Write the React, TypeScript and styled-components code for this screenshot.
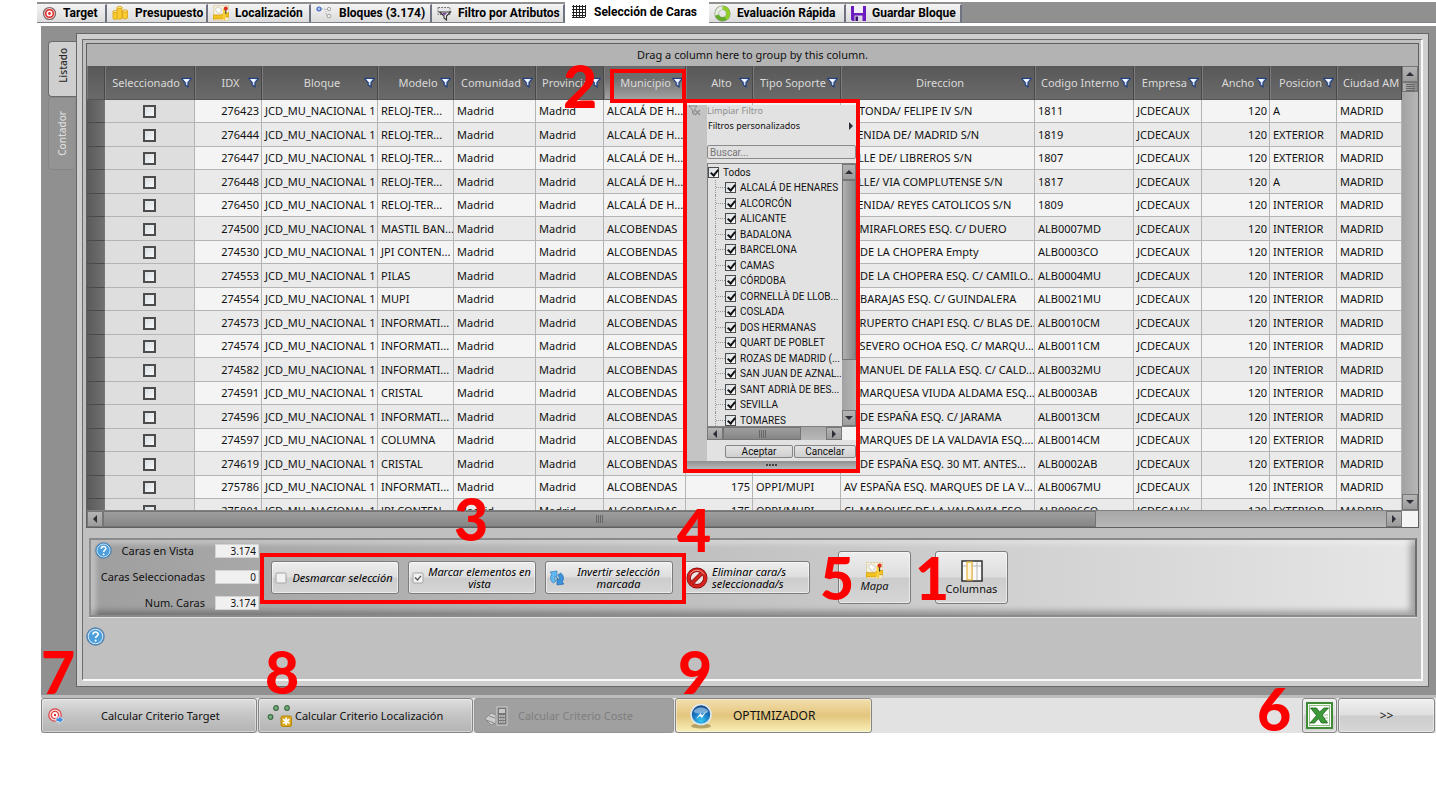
import React from "react";
import styled, { createGlobalStyle, css } from "styled-components";

const ui = `"Noto Sans", "Open Sans", sans-serif`;
const compact = `Roboto, "Liberation Sans", sans-serif`;

const GlobalStyle = createGlobalStyle`
  * { box-sizing: border-box; }
  body { margin: 0; background: #fff; font-family: ${ui}; font-size: 11px; color: #111; }
  button, input { font: inherit; color: inherit; margin: 0; }
`;

const Page = styled.div`
  position: relative;
  padding-top: 2px;
  min-width: 1200px;
`;

/* ---------- top tabs ---------- */

const TabStrip = styled.nav`
  display: flex;
  align-items: flex-end;
  height: 21px;
  margin-left: 37px;
  background: #909090;
  border-bottom: 1px solid #808088;
`;

const TopTab = styled.button<{ $w: number; $active?: boolean }>`
  display: flex;
  align-items: center;
  gap: 6px;
  flex: 0 0 ${(p) => p.$w}px;
  height: 18px;
  padding: 0 0 1px 5px;
  border: 0;
  border-top: 1px solid #f4f4f4;
  border-right: 2px solid #6f7380;
  background: linear-gradient(#f2f2f2, #dcdcdc);
  font: bold 12px/16px ${compact};
  color: #000;
  white-space: nowrap;
  ${(p) =>
    p.$active &&
    css`
      height: 22px;
      margin-bottom: -1px;
      padding: 0 0 2px 7px;
      gap: 8px;
      border-color: #fff;
      background: #fff;
    `}
`;

/* ---------- main frame ---------- */

const Main = styled.main`
  display: flex;
  margin: 3px 0 0 41px;
  padding: 7px 7px 8px;
  background: #909090;
`;

const SideTabs = styled.div`
  flex: 0 0 27px;
  padding-top: 8px;
`;

const SideTab = styled.button<{ $active?: boolean }>`
  position: relative;
  display: flex;
  align-items: center;
  justify-content: center;
  width: ${(p) => (p.$active ? 28 : 26)}px;
  height: ${(p) => (p.$active ? 56 : 73)}px;
  padding: 0 0 ${(p) => (p.$active ? 8 : 0)}px;
  border: 1px solid ${(p) => (p.$active ? "#6a6a6a" : "#868686")};
  border-right: 0;
  border-radius: 4px 0 0 4px;
  background: ${(p) => (p.$active ? "#cfcfcf" : "#949494")};
  color: ${(p) => (p.$active ? "#2a2a2a" : "#dcdcdc")};
  font-size: 10px;
  font-weight: 500;
  span {
    writing-mode: vertical-rl;
    transform: rotate(180deg);
  }
`;

const Frame = styled.div`
  flex: 1;
  min-width: 0;
  padding: 5px;
  border: 1px solid #666;
  background: #cfcfcf;
`;

const FrameBody = styled.div`
  min-height: 642px;
  padding: 3px 2px 3px 3px;
  border: 1px solid #6c6c6c;
  border-right: 2px solid #fafafa;
  border-bottom: 2px solid #fafafa;
  background: #c0c0c0;
`;

/* ---------- grid ---------- */

const GridBox = styled.section`
  border: 1px solid #5f5f5f;
  background: #f4f4f4;
`;

const GroupBar = styled.div`
  height: 22px;
  line-height: 22px;
  text-align: center;
  background: #b3b3b3;
`;

const GridBody = styled.div`
  display: flex;
  height: 444px;
`;

const TableClip = styled.div`
  flex: 1;
  min-width: 0;
  overflow: hidden;
`;

const Table = styled.table`
  width: 100%;
  table-layout: fixed;
  border-collapse: separate;
  border-spacing: 0;
`;

const Th = styled.th<{ $hot?: boolean }>`
  height: 34px;
  padding: 0 2px 0 4px;
  border-right: 1px solid #484848;
  border-left: 1px solid #7a7a7a;
  border-bottom: 1px solid #555;
  background: ${(p) =>
    p.$hot ? "linear-gradient(#6a6a6a, #707070 40%, #a2a2a2)" : "linear-gradient(#585858, #6a6a6a)"};
  color: #dadada;
  font-weight: 400;
  overflow: hidden;
`;

const HeadInner = styled.div`
  display: flex;
  align-items: center;
  gap: 1px;
  white-space: nowrap;
  &::before {
    content: "";
    flex: 0 1 13px;
  }
  span {
    flex: 1 0 auto;
    text-align: center;
  }
  svg {
    flex: none;
  }
`;

const Row = styled.tr<{ $odd: boolean }>`
  height: ${(p) => (p.$odd ? 24 : 23)}px;
  background: ${(p) => (p.$odd ? "#eaeaea" : "#f4f4f4")};
`;

const Td = styled.td<{ $align?: string; $tone?: string }>`
  padding: 0 ${(p) => (p.$align === "right" ? 2 : 0)}px 0 ${(p) => (p.$align ? 0 : 3)}px;
  border-right: 1px solid #b4b4b4;
  border-bottom: 1px solid #b4b4b4;
  line-height: 14px;
  text-align: ${(p) => p.$align || "left"};
  white-space: nowrap;
  overflow: hidden;
  background: ${(p) => p.$tone || "transparent"};
`;

const Handle = styled.td`
  border-bottom: 1px solid #4a4a4a;
  border-right: 1px solid #777;
  background: linear-gradient(90deg, #5a5a5a, #707070);
`;

const Check = styled.input.attrs({ type: "checkbox" })<{ $size: number }>`
  appearance: none;
  position: relative;
  flex: none;
  display: inline-block;
  vertical-align: middle;
  width: ${(p) => p.$size}px;
  height: ${(p) => p.$size}px;
  border: ${(p) => (p.$size > 12 ? "2px" : "1px")} solid #4c4c4c;
  background: linear-gradient(135deg, #d8dee2, #f6f8fa);
  &:checked::after {
    content: "";
    position: absolute;
    left: 3px;
    top: 0;
    width: 3px;
    height: 6px;
    border: solid #111;
    border-width: 0 2px 2px 0;
    transform: rotate(40deg);
  }
`;

/* ---------- scroll bars ---------- */

const VBar = styled.div<{ $w: number }>`
  display: flex;
  flex-direction: column;
  flex: 0 0 ${(p) => p.$w}px;
  background: linear-gradient(90deg, #a2a2a2, #b6b6b6);
`;

const HBar = styled.div`
  display: flex;
  flex: 1;
  min-width: 0;
  background: linear-gradient(#a6a6a6, #b8b8b8);
`;

const HLine = styled.div<{ $h: number }>`
  display: flex;
  border-top: 1px solid #808080;
  height: ${(p) => p.$h}px;
`;

const Corner = styled.div<{ $w: number }>`
  flex: 0 0 ${(p) => p.$w}px;
  background: #f4f4f4;
`;

const ArrowButton = styled.button`
  display: flex;
  align-items: center;
  justify-content: center;
  flex: 0 0 16px;
  min-width: 13px;
  padding: 0;
  border: 1px solid #777;
  background: linear-gradient(#b4b4b4, #9c9c9c);
`;

const Thumb = styled.div<{ $basis: string; $vertical?: boolean }>`
  display: flex;
  align-items: center;
  justify-content: center;
  flex: 0 0 ${(p) => p.$basis};
  border: 1px solid #747474;
  background: ${(p) =>
    p.$vertical ? "linear-gradient(90deg, #b0b0b0, #888)" : "linear-gradient(#9e9e9e, #868686)"};
`;

const Fill = styled.div`
  flex: 1;
`;

/* ---------- selection tools ---------- */

const Tools = styled.section`
  display: flex;
  align-items: center;
  height: 79px;
  margin: 10px 2px 0 3px;
  padding: 0 6px 0 4px;
  border: 2px solid;
  border-color: #8a8a8a #6e6e6e #8a8a8a #909090;
  background: linear-gradient(90deg, #9f9f9f, #c2c2c2 48%, #e6e6e6);
  box-shadow: inset 5px 4px 5px rgba(255, 255, 255, 0.35), inset -5px -4px 6px rgba(0, 0, 0, 0.3),
    0 1px 0 #e2e2e2;
`;

const Fields = styled.div`
  display: grid;
  grid-template-columns: 110px 44px;
  column-gap: 10px;
  row-gap: 12px;
  margin-right: 12px;
  padding-bottom: 2px;
`;

const FieldLabel = styled.label`
  height: 14px;
  line-height: 14px;
  text-align: right;
  white-space: nowrap;
`;

const LabelWithHelp = styled.div`
  display: flex;
  align-items: center;
  justify-content: space-between;
  height: 14px;
  padding-right: 11px;
`;

const HelpButton = styled.button`
  display: block;
  padding: 0;
  border: 0;
  background: none;
  line-height: 0;
`;

const NumberBox = styled.input`
  width: 44px;
  height: 14px;
  padding: 1px 2px 0;
  border: 1px solid #d4d4d4;
  background: #f0f0f0;
  font-size: 10px;
  line-height: 12px;
  text-align: right;
`;

const buttonFace = css`
  border: 1px solid #7c7c7c;
  border-radius: 3px;
  background: linear-gradient(#eeeeee, #dddddd 49%, #cccccc 51%, #d6d6d6);
  box-shadow: inset 0 0 0 1px rgba(255, 255, 255, 0.5);
`;

const ToolButton = styled.button<{ $left?: boolean }>`
  ${buttonFace}
  display: flex;
  align-items: center;
  gap: 4px;
  flex: 0 0 128px;
  height: 33px;
  margin-right: 9px;
  padding: 0 4px 0 3px;
  color: #000;
  font-style: italic;
  line-height: 12px;
  svg {
    flex: none;
  }
  span {
    flex: 1;
    text-align: ${(p) => (p.$left ? "left" : "center")};
  }
`;

const TileButton = styled.button<{ $italic?: boolean }>`
  ${buttonFace}
  display: flex;
  flex-direction: column;
  align-items: center;
  justify-content: center;
  flex: 0 0 73px;
  height: 53px;
  margin-left: ${(p) => (p.$italic ? 19 : 24)}px;
  padding: 0;
  line-height: 14px;
  font-style: ${(p) => (p.$italic ? "italic" : "normal")};
`;

const HelpRow = styled.div`
  padding-top: 10px;
`;

/* ---------- bottom bar ---------- */

const BottomBar = styled.footer`
  display: flex;
  gap: 1px;
  margin-left: 41px;
  padding-right: 1px;
  border-top: 3px solid #bcbcbc;
  background: #e2e2e2;
`;

const BottomButton = styled.button<{
  $w: number;
  $tone?: "gold" | "light";
  $pad?: number;
  $gap?: number;
  $center?: boolean;
}>`
  display: flex;
  align-items: center;
  justify-content: ${(p) => (p.$center ? "center" : "flex-start")};
  gap: ${(p) => p.$gap || 0}px;
  flex: 0 0 ${(p) => p.$w}px;
  height: 35px;
  padding: 0 0 0 ${(p) => p.$pad || 0}px;
  border: 1px solid #858585;
  border-radius: 3px;
  background: ${(p) =>
    p.$tone === "gold"
      ? "linear-gradient(#f3dfae, #e3c67e 50%, #f8efb8)"
      : p.$tone === "light"
        ? "linear-gradient(#f0f0f0, #dedede 49%, #cdcdcd 51%, #d6d6d6)"
        : "linear-gradient(#dedede, #c4c4c4 50%, #b4b4b4)"};
  box-shadow: inset 0 0 0 1px rgba(255, 255, 255, 0.4);
  color: #111;
  font-size: ${(p) => (p.$tone ? 12 : 11)}px;
  white-space: nowrap;
  &:disabled {
    background: #a0a0a0;
    border-color: #969696;
    box-shadow: none;
    color: #7e7e7e;
  }
`;

/* ---------- filter popup ---------- */

const Popup = styled.div`
  position: absolute;
  left: 683px;
  top: 99px;
  width: 177px;
  height: 374px;
  padding-top: 2px;
  border: 4px solid #f00;
  display: flex;
  flex-direction: column;
  overflow: hidden;
`;

const PopupBody = styled.div`
  display: flex;
  flex: 1;
  min-height: 0;
  background: #e2e2e2;
`;

const PopupGutter = styled.div`
  flex: 0 0 20px;
  background: #c4c4c4;
  svg {
    display: block;
  }
`;

const PopupContent = styled.div`
  flex: 1;
  min-width: 0;
  display: flex;
  flex-direction: column;
`;

const MenuItem = styled.button`
  display: flex;
  align-items: center;
  justify-content: space-between;
  height: 17px;
  padding: 0 1px;
  border: 0;
  background: none;
  font-size: 9px;
  line-height: 12px;
  &:disabled {
    height: 12px;
    padding: 0;
    color: #8e8e8e;
  }
`;

const SearchBox = styled.input`
  height: 14px;
  margin-top: 11px;
  padding: 0 2px;
  border: 1px solid #8a8a8a;
  border-radius: 2px;
  background: #e0e0e0;
  font: 10px/12px ${compact};
  &::placeholder {
    color: #777;
  }
`;

const ListBox = styled.div`
  display: flex;
  height: 263px;
  margin-top: 4px;
  border: 1px solid #808080;
  border-width: 1px 0 0 1px;
`;

const List = styled.div`
  flex: 1;
  min-width: 0;
  overflow: hidden;
`;

const ListItem = styled.label<{ $child?: boolean }>`
  display: flex;
  align-items: center;
  gap: 4px;
  height: 16px;
  font: 10px/15px ${compact};
  white-space: nowrap;
  ${(p) =>
    p.$child &&
    css`
      &:nth-child(even) { height: 15px; }
      margin-left: 7px;
      border-left: 1px dotted #999;
      &::before {
        content: "";
        flex: 0 0 9px;
        margin-right: -4px;
        border-top: 1px dotted #999;
      }
    `}
`;

const PopupActions = styled.div`
  display: flex;
  gap: 1px;
  margin: 5px 0 0 18px;
`;

const SmallButton = styled.button<{ $w: number }>`
  flex: 0 0 ${(p) => p.$w}px;
  height: 13px;
  padding: 0;
  border: 1px solid #858585;
  border-radius: 2px;
  background: linear-gradient(#e4e4e4, #cfcfcf);
  font: 10px/11px ${compact};
`;

const Grip = styled.div`
  display: flex;
  gap: 1px;
  justify-content: center;
  align-items: center;
  flex: 0 0 8px;
  background: linear-gradient(#909090, #b8b8b8);
  i {
    width: 2px;
    height: 2px;
    background: #444;
  }
`;

/* ---------- callouts ---------- */

const Outline = styled.div<{ $x: number; $y: number; $w: number; $h: number }>`
  position: absolute;
  left: ${(p) => p.$x}px;
  top: ${(p) => p.$y}px;
  width: ${(p) => p.$w}px;
  height: ${(p) => p.$h}px;
  border: 4px solid #f00;
  pointer-events: none;
`;

const Digit = styled.div<{ $x: number; $y: number }>`
  position: absolute;
  left: ${(p) => p.$x}px;
  top: ${(p) => p.$y}px;
  color: #f00;
  font: 900 59px/60px Lato, sans-serif;
  pointer-events: none;
`;

/* ---------- icons ---------- */

const Funnel = () => (
  <svg width="11" height="11" viewBox="0 0 11 11">
    <path d="M.6 1.300h9.800L7 5.600v4.200L4.200 8V5.600z" fill="#cfe0fa" stroke="#26417e" strokeWidth="1.200" />
    <path d="M2.400 2.200h5L5.400 5z" fill="#fff" />
  </svg>
);

const Arrow = ({ dir }: { dir: "up" | "down" | "left" | "right" }) => {
  const shapes = { up: "M0 6l4-4 4 4z", down: "M0 2l4 4 4-4z", left: "M6 0L2 4l4 4z", right: "M2 0l4 4-4 4z" };
  return (
    <svg width="8" height="8" viewBox="0 0 8 8">
      <path d={shapes[dir]} fill="#2e2e36" />
    </svg>
  );
};

const ThumbLines = ({ vertical }: { vertical?: boolean }) => (
  <svg width="9" height="8" viewBox="0 0 9 8">
    <path
      d={vertical ? "M0 1h9M0 3h9M0 5h9M0 7h9" : "M1 0v8M3 0v8M5 0v8M7 0v8"}
      stroke="#666"
      shapeRendering="crispEdges"
    />
  </svg>
);

const TargetIcon = () => (
  <svg width="15" height="15" viewBox="0 0 15 15">
    <circle cx="7.500" cy="7.500" r="6" fill="#f4d6d6" stroke="#7d6464" strokeWidth="1.200" />
    <circle cx="7.500" cy="7.500" r="3.800" fill="#fff" stroke="#e22a2a" strokeWidth="1.600" />
    <circle cx="7.500" cy="7.500" r="1.400" fill="#e22a2a" />
  </svg>
);

const CoinsIcon = () => (
  <svg width="17" height="16" viewBox="0 0 17 16">
    <g fill="#f9cb2e" stroke="#d9a012" strokeWidth=".8">
      <path d="M1 6.500v7c0 1.200 4.600 1.200 4.600 0v-7z" />
      <ellipse cx="3.300" cy="6.500" rx="2.300" ry="1.100" fill="#fde58a" />
      <path d="M5 2.500v10.800c0 1.200 5 1.200 5 0V2.500z" />
      <ellipse cx="7.500" cy="2.500" rx="2.500" ry="1.200" fill="#fde58a" />
      <path d="M10.500 6v7c0 1.200 5 1.200 5 0V6z" />
      <ellipse cx="13" cy="6" rx="2.500" ry="1.200" fill="#fde58a" />
    </g>
  </svg>
);

const MapIcon = ({ size = 16 }: { size?: number }) => (
  <svg width={size} height={size} viewBox="0 0 16 16">
    <rect x="0.500" y="0.500" width="15" height="15" fill="#f5efda" stroke="#d8cba0" strokeDasharray="2 1" />
    <path d="M2 4l3-2 4 3-3 4z" fill="#fff" stroke="#bbb" strokeWidth=".7" />
    <path d="M0 10h8l3-2h5v4h-5l-2 2H0z" fill="#f2c21e" stroke="#cf9a10" strokeWidth=".7" />
    <path d="M10 15V4h2.500v11z" fill="#f6d040" />
    <circle cx="12.800" cy="3.500" r="2" fill="#dc2f1c" />
    <path d="M12.800 5v4" stroke="#333" />
  </svg>
);

const NodesIcon = () => (
  <svg width="17" height="16" viewBox="0 0 17 16">
    <path d="M6 4h4M10 4v6h2" stroke="#aaa" strokeDasharray="1 1" fill="none" />
    <circle cx="3" cy="4" r="2" fill="#a9c4f5" stroke="#3a62b8" strokeWidth="1.200" />
    <circle cx="13" cy="4" r="1.700" fill="#eee" stroke="#a5a5a5" />
    <circle cx="13" cy="11" r="1.900" fill="#eee" stroke="#a5a5a5" />
  </svg>
);

const FilterIcon = () => (
  <svg width="15" height="15" viewBox="0 0 15 15">
    <rect x="1" y="1.500" width="12" height="7" fill="#e6e6ea" stroke="#777" strokeDasharray="2 1" />
    <path d="M2.500 6h11L9.500 10v4L7 12v-2z" fill="#eee" stroke="#333" strokeWidth="1.100" />
    <path d="M5 7h5l-2.500 2.500z" fill="#7a3fa0" />
  </svg>
);

const GridIcon = () => (
  <svg width="14" height="13" viewBox="0 0 14 13">
    <path
      d="M0 1h13M0 4h13M0 7h13M0 10h13M0 12h13M1 0v12M4 0v12M7 0v12M10 0v12M13 0v12"
      stroke="#222"
      fill="none"
      shapeRendering="crispEdges"
    />
  </svg>
);

const CycleIcon = () => (
  <svg width="17" height="17" viewBox="0 0 17 17" fill="none">
    <circle cx="8.500" cy="8.500" r="5.800" stroke="#8a9a78" strokeWidth="4.600" />
    <path d="M8.500 2.700a5.800 5.800 0 0 1 3 10.700" stroke="#8fd024" strokeWidth="3.400" />
    <path d="M11.500 13.400A5.800 5.800 0 0 1 3 10" stroke="#5fae22" strokeWidth="3.400" />
    <path d="M3 10a5.800 5.800 0 0 1 5.500-7.300" stroke="#e6ece0" strokeWidth="3.400" />
  </svg>
);

const FloppyIcon = () => (
  <svg width="15" height="15" viewBox="0 0 15 15">
    <path d="M0 0h15v15H1.500L0 13.500z" fill="#6a1cc0" />
    <rect x="3" y="0" width="9" height="7" fill="#f4f0fa" />
    <rect x="3.500" y="9.500" width="8" height="5.500" fill="#dcd4e8" />
    <rect x="4.500" y="10.500" width="2.500" height="4.500" fill="#35106a" />
  </svg>
);

const HelpIcon = ({ size }: { size: number }) => (
  <svg width={size} height={size} viewBox="0 0 18 18">
    <circle cx="9" cy="9" r="8.300" fill="#2f7fc4" stroke="#5f86a8" strokeWidth="1" />
    <circle cx="9" cy="9" r="6.900" fill="#4d9fdc" stroke="#cfe6f7" strokeWidth="1" />
    <path d="M6.600 7.200c0-3.200 4.900-3.200 4.900-.3 0 1.700-2.400 1.700-2.400 3.600" fill="none" stroke="#fff" strokeWidth="1.600" />
    <circle cx="9.100" cy="12.900" r="1" fill="#fff" />
  </svg>
);

const BoxIcon = ({ ticked }: { ticked?: boolean }) => (
  <svg width="12" height="12" viewBox="0 0 12 12">
    <rect x="1" y="1" width="10" height="10" rx="1" fill="#f2f2f2" stroke="#a4a4a4" />
    {ticked && <path d="M3 5.500l2.500 2.500L9 3.800" fill="none" stroke="#555" strokeWidth="1.300" />}
  </svg>
);

const RefreshIcon = () => (
  <svg width="16" height="16" viewBox="0 0 16 16">
    <path d="M1 2l7-1v7L6 6.200C5.400 7.800 5.800 9.500 7 11l-2.600 2C1.500 11 .6 7.500 2.800 4z" fill="#62b8ee" stroke="#2f80c0" strokeWidth=".7" />
    <path d="M15 14l-7 1V8l2 1.800c.6-1.600.2-3.300-1-4.800l2.600-2c2.900 2 3.800 5.500 1.600 9z" fill="#3b93dc" stroke="#2468a8" strokeWidth=".7" />
  </svg>
);

const ForbidIcon = () => (
  <svg width="22" height="22" viewBox="0 0 22 22">
    <circle cx="11" cy="11" r="8.300" fill="#efe3e3" stroke="#7e0d0d" strokeWidth="4.400" />
    <circle cx="11" cy="11" r="8.300" fill="none" stroke="#d8221d" strokeWidth="3" />
    <path d="M5.500 16.500l11-11" stroke="#7e0d0d" strokeWidth="4" />
    <path d="M5.500 16.500l11-11" stroke="#d8221d" strokeWidth="2.800" />
    <path d="M4 7.500a8 8 0 0 1 14 0" fill="none" stroke="#f49a90" strokeWidth="1" />
  </svg>
);

const ColumnsIcon = () => (
  <svg width="22" height="22" viewBox="0 0 22 22">
    <rect x="1" y="1" width="20" height="20" fill="#fafafa" stroke="#222" strokeWidth="1.400" />
    <path d="M2 6h18M11 2v18M16 2v18" stroke="#b8b8b8" />
    <rect x="6" y="2" width="5" height="18" fill="#fdf6dc" stroke="#e8b440" strokeWidth="1.200" />
  </svg>
);

const TargetArrowIcon = () => (
  <svg width="17" height="16" viewBox="0 0 17 16">
    <circle cx="7" cy="7" r="6.200" fill="#fbe0e0" stroke="#d84848" strokeWidth="1.300" />
    <circle cx="7" cy="7" r="3.600" fill="#fff" stroke="#e04444" strokeWidth="1.400" />
    <circle cx="7" cy="7" r="1.200" fill="#d83030" />
    <path d="M8 10h3V7.800l4.500 4-4.500 3.800V13.500H8z" fill="#3f8fe0" stroke="#fff" strokeWidth=".6" />
  </svg>
);

const StarNodesIcon = () => (
  <svg width="26" height="24" viewBox="0 0 26 24">
    <g fill="#76b07e" stroke="#3d6b45" strokeWidth="1.200">
      <circle cx="9" cy="4" r="2.300" />
      <circle cx="20" cy="4" r="2.300" />
      <circle cx="3.500" cy="13" r="2.300" />
    </g>
    <rect x="14" y="12" width="10.500" height="10.500" rx="1.500" fill="#dba91a" stroke="#b38610" />
    <path d="M19.200 13.500v7.500M16 15.300l6.500 4M22.500 15.300l-6.500 4" stroke="#fff" strokeWidth="1.700" />
  </svg>
);

const CalcIcon = () => (
  <svg width="24" height="20" viewBox="0 0 24 20">
    <path d="M1 13l6-6 5 2v8l-5 2z" fill="#ccc" stroke="#8a8a8a" />
    <path d="M2 14l8 3M5 10l6 2" stroke="#888" />
    <rect x="13" y="1" width="10" height="18" fill="#777" stroke="#d0d0d0" />
    <rect x="15" y="3" width="6" height="4" fill="#c8c8c8" />
    <path d="M15 10h6M15 13h6M15 16h6" stroke="#d8d8d8" strokeWidth="1.600" strokeDasharray="1.500 .7" />
  </svg>
);

const BallIcon = () => (
  <svg width="24" height="26" viewBox="0 0 24 26">
    <defs>
      <radialGradient id="ball" cx=".5" cy=".8" r=".8">
        <stop offset="0" stopColor="#35c8f4" />
        <stop offset=".5" stopColor="#1b7cc4" />
        <stop offset="1" stopColor="#103a7c" />
      </radialGradient>
    </defs>
    <ellipse cx="12" cy="23" rx="10" ry="2.500" fill="#8b7a3c" opacity=".6" />
    <circle cx="12" cy="11.500" r="10" fill="url(#ball)" stroke="#dfe8ee" strokeWidth="1.600" />
    <path d="M4.500 9C6 3 18 3 19.500 9c-4 2-11 2-15 0z" fill="#9fc8e8" opacity=".7" />
    <path d="M7 16l4.500-6 1.500 2.500L17.500 8 13 15l-2-2z" fill="#fff" />
  </svg>
);

const ExcelIcon = () => (
  <svg width="27" height="27" viewBox="0 0 27 27">
    <rect x="1" y="1" width="25" height="25" fill="#f6faf4" stroke="#3f8a34" strokeWidth="2" />
    <rect x="3.500" y="3.500" width="20" height="20" fill="#fff" stroke="#8fbf80" />
    <path d="M16 16h6M16 19h6M17 13h5" stroke="#9cc48c" />
    <path d="M4.500 6h6l3 4L18 6h4.500l-6.500 7 5.500 8h-6l-3-4.500L8.500 21H4l6.500-7.500z" fill="#3c9a38" stroke="#1d5e1c" strokeWidth=".8" />
  </svg>
);

const ClearFilterIcon = () => (
  <svg width="14" height="11" viewBox="0 0 14 11">
    <path d="M2 1h8L7 5v5L5.500 8V5z" fill="none" stroke="#8d8d8d" />
    <path d="M8 5l5 5M13 5l-5 5" stroke="#8d8d8d" strokeWidth="1.300" />
  </svg>
);

/* ---------- data ---------- */

const topTabs = [
  { label: "Target", w: 70, icon: <TargetIcon /> },
  { label: "Presupuesto", w: 101, icon: <CoinsIcon /> },
  { label: "Localización", w: 103, icon: <MapIcon /> },
  { label: "Bloques (3.174)", w: 121, icon: <NodesIcon /> },
  { label: "Filtro por Atributos", w: 133, icon: <FilterIcon /> },
  { label: "Selección de Caras", w: 144, icon: <GridIcon />, active: true },
  { label: "Evaluación Rápida", w: 137, icon: <CycleIcon /> },
  { label: "Guardar Bloque", w: 116, icon: <FloppyIcon /> },
];

const columns: { label: string; w?: number; hot?: boolean; noFilter?: boolean }[] = [
  { label: "Seleccionado", w: 90 },
  { label: "IDX", w: 67 },
  { label: "Bloque", w: 116 },
  { label: "Modelo", w: 76 },
  { label: "Comunidad", w: 82 },
  { label: "Provincia", w: 68 },
  { label: "Municipio", w: 82, hot: true },
  { label: "Alto", w: 67 },
  { label: "Tipo Soporte", w: 88 },
  { label: "Direccion" },
  { label: "Codigo Interno", w: 99 },
  { label: "Empresa", w: 68 },
  { label: "Ancho", w: 68 },
  { label: "Posicion", w: 67 },
  { label: "Ciudad AM", w: 65, noFilter: true },
];

type Face = [string, string, string, string, string, string];

const faces: Face[] = [
  ["276423", "RELOJ-TER...", "ALCALÁ DE H...", "ROTONDA/ FELIPE IV S/N", "1811", "A"],
  ["276444", "RELOJ-TER...", "ALCALÁ DE H...", "AVENIDA DE/ MADRID S/N", "1819", "EXTERIOR"],
  ["276447", "RELOJ-TER...", "ALCALÁ DE H...", "CALLE DE/ LIBREROS S/N", "1807", "EXTERIOR"],
  ["276448", "RELOJ-TER...", "ALCALÁ DE H...", "CALLE/ VIA COMPLUTENSE S/N", "1817", "A"],
  ["276450", "RELOJ-TER...", "ALCALÁ DE H...", "AVENIDA/ REYES CATOLICOS S/N", "1809", "INTERIOR"],
  ["274500", "MASTIL BAN...", "ALCOBENDAS", "CL MIRAFLORES ESQ. C/ DUERO", "ALB0007MD", "INTERIOR"],
  ["274530", "JPI CONTEN...", "ALCOBENDAS", "AV DE LA CHOPERA Empty", "ALB0003CO", "INTERIOR"],
  ["274553", "PILAS", "ALCOBENDAS", "AV DE LA CHOPERA ESQ. C/ CAMILO...", "ALB0004MU", "INTERIOR"],
  ["274554", "MUPI", "ALCOBENDAS", "AV BARAJAS ESQ. C/ GUINDALERA", "ALB0021MU", "INTERIOR"],
  ["274573", "INFORMATI...", "ALCOBENDAS", "CL RUPERTO CHAPI ESQ. C/ BLAS DE...", "ALB0010CM", "INTERIOR"],
  ["274574", "INFORMATI...", "ALCOBENDAS", "CL SEVERO OCHOA ESQ. C/ MARQU...", "ALB0011CM", "INTERIOR"],
  ["274582", "INFORMATI...", "ALCOBENDAS", "CL MANUEL DE FALLA ESQ. C/ CALD...", "ALB0032MU", "INTERIOR"],
  ["274591", "CRISTAL", "ALCOBENDAS", "CL MARQUESA VIUDA ALDAMA ESQ...", "ALB0003AB", "INTERIOR"],
  ["274596", "INFORMATI...", "ALCOBENDAS", "AV DE ESPAÑA ESQ. C/ JARAMA", "ALB0013CM", "INTERIOR"],
  ["274597", "COLUMNA", "ALCOBENDAS", "CL MARQUES DE LA VALDAVIA ESQ....", "ALB0014CM", "EXTERIOR"],
  ["274619", "CRISTAL", "ALCOBENDAS", "AV DE ESPAÑA ESQ. 30 MT. ANTES...", "ALB0002AB", "EXTERIOR"],
  ["275786", "INFORMATI...", "ALCOBENDAS", "AV ESPAÑA ESQ. MARQUES DE LA V...", "ALB0067MU", "INTERIOR"],
  ["275801", "JPI CONTEN...", "ALCOBENDAS", "CL MARQUES DE LA VALDAVIA ESQ....", "ALB0006CO", "EXTERIOR"],
];

const cities = [
  "ALCALÁ DE HENARES",
  "ALCORCÓN",
  "ALICANTE",
  "BADALONA",
  "BARCELONA",
  "CAMAS",
  "CÓRDOBA",
  "CORNELLÀ DE LLOB...",
  "COSLADA",
  "DOS HERMANAS",
  "QUART DE POBLET",
  "ROZAS DE MADRID (...",
  "SAN JUAN DE AZNAL...",
  "SANT ADRIÀ DE BES...",
  "SEVILLA",
  "TOMARES",
];

const digits = [
  { n: "2", x: 563, y: 56 },
  { n: "3", x: 454, y: 489 },
  { n: "4", x: 677, y: 500 },
  { n: "5", x: 820, y: 548 },
  { n: "1", x: 915, y: 548 },
  { n: "6", x: 1257, y: 679 },
  { n: "7", x: 41, y: 642 },
  { n: "8", x: 265, y: 642 },
  { n: "9", x: 678, y: 642 },
];

/* ---------- sections ---------- */

const FacesTable = () => (
  <Table>
    <colgroup>
      <col style={{ width: 18 }} />
      {columns.map((c) => (
        <col key={c.label} style={c.w ? { width: c.w } : undefined} />
      ))}
    </colgroup>
    <thead>
      <tr>
        <Th aria-label="Fila" />
        {columns.map((c) => (
          <Th key={c.label} $hot={c.hot} scope="col">
            <HeadInner>
              <span>{c.label}</span>
              {!c.noFilter && <Funnel />}
            </HeadInner>
          </Th>
        ))}
      </tr>
    </thead>
    <tbody>
      {faces.map(([idx, model, town, address, code, position], i) => (
        <Row key={idx} $odd={i % 2 === 1}>
          <Handle />
          <Td $align="center" $tone="#dedede">
            <Check $size={13} aria-label={`Seleccionar ${idx}`} />
          </Td>
          <Td $align="right">{idx}</Td>
          <Td>JCD_MU_NACIONAL 1</Td>
          <Td>{model}</Td>
          <Td>Madrid</Td>
          <Td>Madrid</Td>
          <Td>{town}</Td>
          <Td $align="right">{i > 15 ? "175" : ""}</Td>
          <Td>{i > 15 ? "OPPI/MUPI" : ""}</Td>
          <Td>{address}</Td>
          <Td>{code}</Td>
          <Td>JCDECAUX</Td>
          <Td $align="right">120</Td>
          <Td>{position}</Td>
          <Td>MADRID</Td>
        </Row>
      ))}
    </tbody>
  </Table>
);

const Grid = () => (
  <GridBox>
    <GroupBar>Drag a column here to group by this column.</GroupBar>
    <GridBody>
      <TableClip>
        <FacesTable />
      </TableClip>
      <VBar $w={16}>
        <ArrowButton aria-label="Subir"><Arrow dir="up" /></ArrowButton>
        <Thumb $basis="10px" $vertical><ThumbLines vertical /></Thumb>
        <Fill />
        <ArrowButton aria-label="Bajar"><Arrow dir="down" /></ArrowButton>
      </VBar>
    </GridBody>
    <HLine $h={17}>
      <HBar>
        <ArrowButton aria-label="Izquierda"><Arrow dir="left" /></ArrowButton>
        <Thumb $basis="calc(77% - 20px)"><ThumbLines /></Thumb>
        <Fill />
        <ArrowButton aria-label="Derecha"><Arrow dir="right" /></ArrowButton>
      </HBar>
      <Corner $w={16} />
    </HLine>
  </GridBox>
);

const SelectionTools = () => (
  <Tools>
    <Fields>
      <LabelWithHelp>
        <HelpButton aria-label="Ayuda"><HelpIcon size={17} /></HelpButton>
        <FieldLabel htmlFor="vista">Caras en Vista</FieldLabel>
      </LabelWithHelp>
      <NumberBox id="vista" defaultValue="3.174" />
      <FieldLabel htmlFor="seleccionadas">Caras Seleccionadas</FieldLabel>
      <NumberBox id="seleccionadas" defaultValue="0" />
      <FieldLabel htmlFor="numero">Num. Caras</FieldLabel>
      <NumberBox id="numero" defaultValue="3.174" />
    </Fields>
    <ToolButton><BoxIcon /><span>Desmarcar selección</span></ToolButton>
    <ToolButton><BoxIcon ticked /><span>Marcar elementos en vista</span></ToolButton>
    <ToolButton><RefreshIcon /><span>Invertir selección marcada</span></ToolButton>
    <ToolButton $left><ForbidIcon /><span>Eliminar cara/s seleccionada/s</span></ToolButton>
    <TileButton $italic><MapIcon size={17} />Mapa</TileButton>
    <TileButton><ColumnsIcon />Columnas</TileButton>
  </Tools>
);

const FilterMenu = () => (
  <Popup>
    <PopupBody>
      <PopupGutter><ClearFilterIcon /></PopupGutter>
      <PopupContent>
        <MenuItem disabled>Limpiar Filtro</MenuItem>
        <MenuItem>Filtros personalizados<Arrow dir="right" /></MenuItem>
        <SearchBox placeholder="Buscar..." aria-label="Buscar" />
        <ListBox>
          <List>
            <ListItem><Check $size={11} defaultChecked />Todos</ListItem>
            {cities.map((city) => (
              <ListItem key={city} $child><Check $size={11} defaultChecked />{city}</ListItem>
            ))}
          </List>
          <VBar $w={14}>
            <ArrowButton aria-label="Subir lista"><Arrow dir="up" /></ArrowButton>
            <Thumb $basis="180px" $vertical />
            <Fill />
            <ArrowButton aria-label="Bajar lista"><Arrow dir="down" /></ArrowButton>
          </VBar>
        </ListBox>
        <HLine $h={14}>
          <HBar>
            <ArrowButton aria-label="Lista a la izquierda"><Arrow dir="left" /></ArrowButton>
            <Thumb $basis="78px"><ThumbLines /></Thumb>
            <Fill />
            <ArrowButton aria-label="Lista a la derecha"><Arrow dir="right" /></ArrowButton>
          </HBar>
          <Corner $w={14} />
        </HLine>
        <PopupActions>
          <SmallButton $w={68}>Aceptar</SmallButton>
          <SmallButton $w={62}>Cancelar</SmallButton>
        </PopupActions>
      </PopupContent>
    </PopupBody>
    <Grip><i /><i /><i /><i /></Grip>
  </Popup>
);

export default function App() {
  return (
    <Page>
      <GlobalStyle />
      <TabStrip>
        {topTabs.map((t) => (
          <TopTab key={t.label} $w={t.w} $active={t.active}>
            {t.icon}
            {t.label}
          </TopTab>
        ))}
      </TabStrip>
      <Main>
        <SideTabs>
          <SideTab $active><span>Listado</span></SideTab>
          <SideTab><span>Contador</span></SideTab>
        </SideTabs>
        <Frame>
          <FrameBody>
            <Grid />
            <SelectionTools />
            <HelpRow>
              <HelpButton aria-label="Ayuda general"><HelpIcon size={19} /></HelpButton>
            </HelpRow>
          </FrameBody>
        </Frame>
      </Main>
      <BottomBar>
        <BottomButton $w={216} $pad={6} $gap={36}><TargetArrowIcon />Calcular Criterio Target</BottomButton>
        <BottomButton $w={215} $pad={8} $gap={2}><StarNodesIcon />Calcular Criterio Localización</BottomButton>
        <BottomButton $w={200} $pad={9} $gap={10} disabled><CalcIcon />Calcular Criterio Coste</BottomButton>
        <BottomButton $w={197} $pad={13} $gap={20} $tone="gold"><BallIcon />OPTIMIZADOR</BottomButton>
        <Fill />
        <BottomButton $w={35} $tone="light" $center aria-label="Exportar a Excel"><ExcelIcon /></BottomButton>
        <BottomButton $w={97} $tone="light" $center>&gt;&gt;</BottomButton>
      </BottomBar>
      <FilterMenu />
      <Outline $x={610} $y={69} $w={76} $h={34} />
      <Outline $x={260} $y={553} $w={426} $h={51} />
      {digits.map((d) => (
        <Digit key={d.n} $x={d.x} $y={d.y}>{d.n}</Digit>
      ))}
    </Page>
  );
}
